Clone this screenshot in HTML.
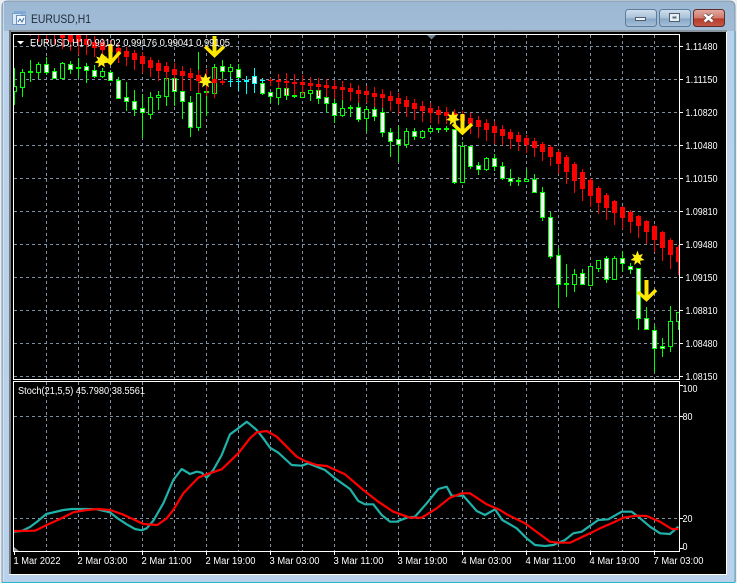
<!DOCTYPE html>
<html><head><meta charset="utf-8"><title>EURUSD,H1</title>
<style>
html,body{margin:0;padding:0;background:#e8eef2;width:737px;height:583px;overflow:hidden}
svg{display:block}
text{font-family:"Liberation Sans",sans-serif;fill:#fff;font-size:10px}
.c{shape-rendering:crispEdges}
.g{stroke:#7f90a2;stroke-width:1;stroke-dasharray:3 3;fill:none}
</style></head><body>
<svg width="737" height="583" viewBox="0 0 737 583" xmlns="http://www.w3.org/2000/svg">
<defs>
<linearGradient id="tb" x1="0" y1="0" x2="0" y2="1"><stop offset="0" stop-color="#9db8d3"/><stop offset=".06" stop-color="#a3bdd7"/><stop offset="1" stop-color="#bcd3ea"/></linearGradient>
<linearGradient id="bt" x1="0" y1="0" x2="0" y2="1"><stop offset="0" stop-color="#d0dfec"/><stop offset=".5" stop-color="#a9c1d9"/><stop offset=".55" stop-color="#88a8c6"/><stop offset="1" stop-color="#a6c0da"/></linearGradient>
<linearGradient id="cl" x1="0" y1="0" x2="0" y2="1"><stop offset="0" stop-color="#e3aca2"/><stop offset=".5" stop-color="#cf7a6c"/><stop offset=".55" stop-color="#b83c28"/><stop offset="1" stop-color="#c25a48"/></linearGradient>
<clipPath id="mc"><rect x="14" y="35" width="665" height="344"/></clipPath>
<clipPath id="sc"><rect x="14" y="382" width="665" height="169"/></clipPath>
<polygon id="st" points="0,-8 1.6,-3.4 5.5,-4.5 3.4,-1 7,1.5 2.6,2.4 3.4,6.5 0,3.8 -3.4,6.5 -2.6,2.4 -7,1.5 -3.4,-1 -5.5,-4.5 -1.6,-3.4" fill="#ffee10"/>
</defs>
<!-- window chrome -->
<path d="M2 582V7Q2 1 8 1H729Q735 1 735 7V582Z" fill="url(#tb)" stroke="#7f98ab" stroke-width="1"/>
<rect x="3" y="31" width="731" height="551" fill="#b9d1ea"/>
<rect x="3" y="2" width="1" height="579" fill="#dde8f2" opacity=".7"/>
<path class="c" d="M2 582.500H735" stroke="#2bb7c4" stroke-width="1"/>
<path class="c" d="M735.500 31V582" stroke="#6fb5c5" stroke-width="1"/>
<rect class="c" x="9" y="30" width="718" height="545" fill="#fff"/>
<rect class="c" x="9" y="30" width="718" height="2" fill="#8a949c"/>
<rect class="c" x="9" y="30" width="2" height="544" fill="#70787e"/>
<rect class="c" x="11" y="32" width="715" height="542" fill="#000"/>

<!-- title -->
<g class="c">
<rect x="14" y="11" width="12" height="3" fill="#7fa9d6"/>
<rect x="12.500" y="13.500" width="9" height="11" fill="#dbe9f7" stroke="#7c9fc8"/>
<rect x="16.500" y="15.500" width="9" height="9" fill="#f2f7fc" stroke="#6d8fbb"/>
</g>
<path d="M18 22l2-3 2 3 2-4" stroke="#3a6da8" fill="none" stroke-width="1"/>
<text x="31" y="23" textLength="60" lengthAdjust="spacingAndGlyphs" style="fill:#1d2b38;font-size:12px">EURUSD,H1</text>

<!-- buttons -->
<rect x="625.500" y="9.500" width="31" height="17" rx="3" fill="url(#bt)" stroke="#5f7d9b"/>
<rect x="635.500" y="17.500" width="10" height="3" fill="#eef2f5" stroke="#4d6070" stroke-width="1" class="c"/>
<rect x="659.500" y="9.500" width="31" height="17" rx="3" fill="url(#bt)" stroke="#5f7d9b"/>
<rect x="669.500" y="13.500" width="10" height="8" fill="#e8eef3" stroke="#4d6070" class="c"/>
<rect x="672.500" y="16.500" width="4" height="2" fill="#55697c" class="c"/>
<rect x="693.500" y="9.500" width="31" height="17" rx="3" fill="url(#cl)" stroke="#5e2b2e"/>
<path d="M704.500 14.500l8 7M712.500 14.500l-8 7" stroke="#5e3a3a" stroke-width="4" fill="none"/>
<path d="M704.500 14.500l8 7M712.500 14.500l-8 7" stroke="#fff" stroke-width="2.600" fill="none"/>

<!-- frames -->
<g class="c" stroke="#fff" stroke-width="1" fill="none">
<path d="M13.500 34.500H679.500V379.500H13.500Z"/>
<path d="M13.500 381.500H679.500V551.500H13.500Z"/>
</g>

<!-- grid -->
<g class="c">
<path class="g" d="M14 46.500H679M14 79.500H679M14 112.500H679M14 145.500H679M14 178.500H679M14 211.500H679M14 244.500H679M14 277.500H679M14 310.500H679M14 343.500H679M14 376.500H679M14 416.500H679M14 518.500H679"/>
<path class="g" d="M46.500 35V379M78.500 35V379M110.500 35V379M142.500 35V379M174.500 35V379M206.500 35V379M238.500 35V379M270.500 35V379M302.500 35V379M334.500 35V379M366.500 35V379M398.500 35V379M430.500 35V379M462.500 35V379M494.500 35V379M526.500 35V379M558.500 35V379M590.500 35V379M622.500 35V379M654.500 35V379"/>
<path class="g" d="M46.500 382V551M78.500 382V551M110.500 382V551M142.500 382V551M174.500 382V551M206.500 382V551M238.500 382V551M270.500 382V551M302.500 382V551M334.500 382V551M366.500 382V551M398.500 382V551M430.500 382V551M462.500 382V551M494.500 382V551M526.500 382V551M558.500 382V551M590.500 382V551M622.500 382V551M654.500 382V551"/>
</g>

<!-- candles -->
<g class="c" clip-path="url(#mc)">
<path fill="none" stroke="#0f0" stroke-width="1" d="M14.500 68V105M22.500 69V97M30.500 60V82M38.500 62V79M46.500 57V75M54.500 68V78M62.500 62V78M70.500 61V74M78.500 58V78M86.500 63V83M94.500 65V78M102.500 68V78M110.500 70V81M118.500 77V99M126.500 82V111M134.500 90V116M142.500 94V138M150.500 92V119M158.500 91V110M166.500 77V106M174.500 77V106M182.500 86V119M190.500 96V137M198.500 52V131M206.500 70V116M214.500 64V93M222.500 60V80M230.500 64V78M238.500 64V78M262.500 83V95M270.500 92V103M278.500 85V105M286.500 85V100M294.500 94V98M302.500 90V97M310.500 87V101M318.500 88V104M326.500 95V113M334.500 99V123M342.500 99V117M350.500 105V117M358.500 103V122M366.500 106V132M374.500 106V121M382.500 108V137M390.500 128V157M398.500 126V162M406.500 128V148M414.500 128V140M422.500 130V139M430.500 127V133M438.500 129V133M446.500 126V132M454.500 129V184M462.500 142V183M470.500 146V169M478.500 162V175M486.500 157V171M494.500 154V171M502.500 162V180M510.500 169V186M518.500 177V186M526.500 169V181M534.500 174V193M542.500 187V221M550.500 212V259M558.500 248V308M566.500 264V297M574.500 269V292M582.500 269V285M590.500 266V285M598.500 260V272M606.500 256V283M614.500 256V279M622.500 251V272M630.500 263V274M638.500 268V330M646.500 307V330M654.500 325V372M662.500 338V357M670.500 306V352M678.500 312V330"/>
<path fill="none" stroke="#0f0" stroke-width="2" d="M28 72h5M76 68h5M204 92h5M292 96h5M348 108h5M436 129h5M444 129h5M516 181h5M564 284h5"/>
<path fill="#000" stroke="#0f0" stroke-width="1" d="M12.500 86.500h4v5h-4zM20.500 72.500h4v15h-4zM36.500 64.500h4v8h-4zM60.500 63.500h4v15h-4zM100.500 71.500h4v5h-4zM148.500 97.500h4v17h-4zM156.500 95.500h4v2h-4zM164.500 78.500h4v18h-4zM196.500 93.500h4v34h-4zM212.500 67.500h4v26h-4zM228.500 67.500h4v4h-4zM276.500 88.500h4v9h-4zM300.500 92.500h4v5h-4zM308.500 90.500h4v3h-4zM340.500 108.500h4v7h-4zM364.500 109.500h4v9h-4zM404.500 131.500h4v13h-4zM420.500 131.500h4v6h-4zM428.500 128.500h4v3h-4zM460.500 146.500h4v36h-4zM484.500 158.500h4v11h-4zM524.500 179.500h4v2h-4zM572.500 274.500h4v10h-4zM588.500 266.500h4v19h-4zM596.500 260.500h4v8h-4zM612.500 258.500h4v21h-4zM668.500 321.500h4v25h-4zM676.500 312.500h4v9h-4z"/>
<path fill="#fff" stroke="#0f0" stroke-width="1" d="M44.500 64.500h4v8h-4zM52.500 71.500h4v7h-4zM68.500 64.500h4v5h-4zM84.500 66.500h4v4h-4zM92.500 70.500h4v6h-4zM108.500 72.500h4v8h-4zM116.500 80.500h4v18h-4zM124.500 97.500h4v4h-4zM132.500 101.500h4v8h-4zM140.500 108.500h4v4h-4zM172.500 78.500h4v13h-4zM180.500 91.500h4v10h-4zM188.500 102.500h4v25h-4zM220.500 66.500h4v5h-4zM236.500 69.500h4v8h-4zM260.500 83.500h4v10h-4zM268.500 92.500h4v4h-4zM284.500 88.500h4v7h-4zM316.500 90.500h4v8h-4zM324.500 97.500h4v6h-4zM332.500 103.500h4v12h-4zM356.500 107.500h4v12h-4zM372.500 109.500h4v7h-4zM380.500 112.500h4v20h-4zM388.500 132.500h4v9h-4zM396.500 139.500h4v5h-4zM412.500 131.500h4v5h-4zM452.500 129.500h4v53h-4zM468.500 146.500h4v20h-4zM476.500 165.500h4v4h-4zM492.500 158.500h4v8h-4zM500.500 166.500h4v12h-4zM508.500 178.500h4v3h-4zM532.500 179.500h4v13h-4zM540.500 192.500h4v25h-4zM548.500 217.500h4v39h-4zM556.500 255.500h4v29h-4zM580.500 273.500h4v11h-4zM604.500 258.500h4v21h-4zM620.500 258.500h4v5h-4zM628.500 266.500h4v3h-4zM636.500 268.500h4v50h-4zM644.500 318.500h4v11h-4zM652.500 330.500h4v18h-4zM660.500 346.500h4v2h-4z"/>
<!-- cyan -->
<path fill="none" stroke="#0ff" stroke-width="1" d="M230.500 77V87M238.500 78V91M246.500 76V94M254.500 68V93M262.500 78V83"/>
<path fill="none" stroke="#0ff" stroke-width="1" d="M228 81.500h5M236 81.500h5M260 80.500h5"/>
<path fill="none" stroke="#0ff" stroke-width="2" d="M244 81h5"/>
<path fill="#fff" stroke="#0ff" stroke-width="1" d="M252.500 76.500h4v7h-4z"/>
<!-- red -->
<path fill="none" stroke="#f00" stroke-width="1" d="M30.500 35V36M38.500 35V42M46.500 35V43M54.500 35V44M62.500 35V49M70.500 35V51M78.500 35V55M86.500 35V55M94.500 36V57M102.500 38V58M110.500 40V60M118.500 44V63M126.500 47V66M134.500 50V70M142.500 52V73M150.500 57V77M158.500 60V81M166.500 62V81M174.500 63V90M182.500 66V91M190.500 68V91M198.500 70V93M206.500 69V96M214.500 68V98M222.500 79V85M270.500 78V86M278.500 74V88M286.500 73V95M294.500 74V95M302.500 75V95M310.500 77V90M318.500 78V96M326.500 79V97M334.500 80V99M342.500 81V100M350.500 83V101M358.500 85V103M366.500 86V103M374.500 87V107M382.500 89V108M390.500 91V111M398.500 93V114M406.500 96V117M414.500 99V120M422.500 101V122M430.500 103V123M438.500 106V124M446.500 107V124M454.500 109V127M462.500 111V130M470.500 113V134M478.500 116V138M486.500 119V141M494.500 121V144M502.500 125V145M510.500 129V149M518.500 132V151M526.500 135V153M534.500 138V157M542.500 142V161M550.500 145V166M558.500 150V174M566.500 155V184M574.500 162V193M582.500 169V201M590.500 178V207M598.500 186V214M606.500 193V220M614.500 200V225M622.500 206V229M630.500 210V233M638.500 215V238M646.500 220V244M654.500 225V252M662.500 231V261M670.500 238V269M678.500 245V275M268 80.500h5"/>
<path fill="#f00" d="M60 35h5v3h-5zM68 35h5v7h-5zM76 35h5v7h-5zM84 39h5v6h-5zM92 42h5v6h-5zM100 43h5v7h-5zM108 45h5v7h-5zM116 48h5v6h-5zM124 51h5v6h-5zM132 53h5v7h-5zM140 56h5v8h-5zM148 60h5v8h-5zM156 63h5v8h-5zM164 66h5v6h-5zM172 69h5v6h-5zM180 71h5v5h-5zM188 73h5v5h-5zM196 75h5v6h-5zM204 78h5v5h-5zM212 79h5v4h-5zM220 81h5v2h-5zM276 80h5v2h-5zM284 81h5v2h-5zM292 82h5v2h-5zM300 82h5v3h-5zM308 83h5v3h-5zM316 84h5v3h-5zM324 85h5v3h-5zM332 86h5v3h-5zM340 87h5v3h-5zM348 88h5v4h-5zM356 90h5v4h-5zM364 91h5v4h-5zM372 93h5v4h-5zM380 94h5v4h-5zM388 96h5v5h-5zM396 98h5v6h-5zM404 100h5v7h-5zM412 103h5v6h-5zM420 106h5v5h-5zM428 108h5v5h-5zM436 110h5v5h-5zM444 112h5v4h-5zM452 113h5v5h-5zM460 115h5v6h-5zM468 118h5v6h-5zM476 120h5v7h-5zM484 123h5v7h-5zM492 126h5v7h-5zM500 129h5v7h-5zM508 132h5v7h-5zM516 135h5v7h-5zM524 138h5v7h-5zM532 141h5v7h-5zM540 144h5v8h-5zM548 147h5v10h-5zM556 152h5v12h-5zM564 157h5v15h-5zM572 164h5v17h-5zM580 172h5v17h-5zM588 180h5v16h-5zM596 188h5v15h-5zM604 195h5v13h-5zM612 201h5v12h-5zM620 207h5v11h-5zM628 212h5v10h-5zM636 216h5v10h-5zM644 221h5v11h-5zM652 226h5v14h-5zM660 232h5v16h-5zM668 240h5v15h-5zM676 247h5v15h-5z"/>
</g>

<!-- stars and arrows -->
<g clip-path="url(#mc)">
<use href="#st" x="101.500" y="61"/>
<use href="#st" x="205.500" y="81"/>
<use href="#st" x="453" y="118.500"/>
<use href="#st" x="637.500" y="258.500"/>
<g fill="none" stroke="#ffe600" stroke-linejoin="miter" stroke-linecap="butt">
<path stroke-width="4" d="M110.500 44V62M214.500 36V55M462.500 114V132M646.500 280V298"/>
<path stroke-width="3.500" d="M101 55L110.500 63L120 52M205 46.500L214.500 55.500L224 46.500M453 124L462.500 133L472 124M638 292L646.500 299.500L656 290"/>
</g>
</g>

<!-- markers -->
<path d="M427 35h9l-4.500 4.500z" fill="#6f8090"/>
<path d="M14 547l5 4h-5z" fill="#8b98a4"/>
<path d="M17 41h7l-3.500 3.500z" fill="#fff"/>
<text x="30" y="46" textLength="200" lengthAdjust="spacingAndGlyphs">EURUSD,H1 0.99102 0.99176 0.99041 0.99105</text>
<text x="18" y="394" textLength="127" lengthAdjust="spacingAndGlyphs">Stoch(21,5,5) 45.7980 38.5561</text>

<!-- stochastic -->
<g clip-path="url(#sc)" fill="none" stroke-width="2.200" stroke-linejoin="round">
<polyline stroke="#20b2aa" points="14,531.700 21.700,531 30,527 38.300,520.700 46.300,514 55,512 63.300,510 71.700,509 86.700,509 96.700,509.300 110,512.300 116.700,517.700 126.700,524.300 135,529 141.700,530.300 146.700,528.300 153.300,520.700 163.300,503.300 173.300,480 181.700,469 190,474 196.700,471.700 201.700,472.700 206.700,477.700 213.300,470 221.700,455 230,434.300 238.300,428.300 246.700,421.700 250,424.300 256.700,430 263.300,438.300 270,447.700 278.300,452.700 291.700,465 301.700,465.700 308.300,463.300 316.700,466.700 325,470 335,478.300 350,489 358.300,501 365,504.300 373.300,504.300 381.700,515 390,521.700 396.700,521.700 406.700,517.700 415,516.700 426.700,503.300 438.300,489 446.700,486.700 451.700,495.700 463.300,495.700 476.700,511 485,515 495,509.300 502.300,520 516.700,528.300 526.700,538.300 535,545 545,546 553.300,545 565,540 573.300,533.300 581.700,531.700 598.300,520 608.300,519.300 621.700,511.700 631.700,511.700 638.300,516.700 650,526.700 660,533.300 670,534 678.300,526.700"/>
<polyline stroke="#f00" points="14,531 35,530.700 46.700,525 60,519 73.300,512.300 86.700,510 98.300,509 110,510 121.700,514 133.300,519.300 143.300,524 157.300,525 166.700,518.300 173.300,510 183.300,493.300 198.300,477.700 206.700,474.300 221.700,469.300 238.300,453.300 250,438.300 256.700,432.300 266.700,431 276.700,436.700 286.700,446.700 296.700,456.700 305,461 316.700,465 326.700,466 345,474.300 363.300,490 378.300,501.700 393.300,511.700 410,517.700 421.700,517.700 436.700,508.300 450,497.700 461.700,493.300 470,493.300 486.700,504.300 500,510 506.700,514.300 525,523.300 550,541.700 558.300,542.700 570,542.700 590,533.300 600,528.300 611.700,523.300 623.300,517.700 636.700,515.700 646.700,516 660,521.700 671.700,529 678.300,529"/>
</g>

<!-- axis ticks -->
<path class="c" stroke="#fff" stroke-width="1" fill="none" d="M680 46.500h3M680 79.500h3M680 112.500h3M680 145.500h3M680 178.500h3M680 211.500h3M680 244.500h3M680 277.500h3M680 310.500h3M680 343.500h3M680 376.500h3M680 385.500h3M680 416.500h3M680 518.500h3M680 548.500h3M14.500 552v3M78.500 552v3M142.500 552v3M206.500 552v3M270.500 552v3M334.500 552v3M398.500 552v3M462.500 552v3M526.500 552v3M590.500 552v3M654.500 552v3"/>

<!-- price labels -->
<g>
<text x="685.500" y="50" textLength="32" lengthAdjust="spacingAndGlyphs">1.11480</text>
<text x="685.500" y="83" textLength="32" lengthAdjust="spacingAndGlyphs">1.11150</text>
<text x="685.500" y="116" textLength="32" lengthAdjust="spacingAndGlyphs">1.10820</text>
<text x="685.500" y="149" textLength="32" lengthAdjust="spacingAndGlyphs">1.10480</text>
<text x="685.500" y="182" textLength="32" lengthAdjust="spacingAndGlyphs">1.10150</text>
<text x="685.500" y="215" textLength="32" lengthAdjust="spacingAndGlyphs">1.09810</text>
<text x="685.500" y="248" textLength="32" lengthAdjust="spacingAndGlyphs">1.09480</text>
<text x="685.500" y="281" textLength="32" lengthAdjust="spacingAndGlyphs">1.09150</text>
<text x="685.500" y="314" textLength="32" lengthAdjust="spacingAndGlyphs">1.08810</text>
<text x="685.500" y="347" textLength="32" lengthAdjust="spacingAndGlyphs">1.08480</text>
<text x="685.500" y="380" textLength="32" lengthAdjust="spacingAndGlyphs">1.08150</text>
<text x="682.500" y="392" textLength="15" lengthAdjust="spacingAndGlyphs">100</text>
<text x="682.500" y="420" textLength="10" lengthAdjust="spacingAndGlyphs">80</text>
<text x="682.500" y="522" textLength="10" lengthAdjust="spacingAndGlyphs">20</text>
<text x="682.500" y="550" textLength="5" lengthAdjust="spacingAndGlyphs">0</text>
</g>
<!-- time labels -->
<g>
<text x="13.500" y="564" textLength="47" lengthAdjust="spacingAndGlyphs">1 Mar 2022</text>
<text x="77.500" y="564" textLength="50" lengthAdjust="spacingAndGlyphs">2 Mar 03:00</text>
<text x="141.500" y="564" textLength="50" lengthAdjust="spacingAndGlyphs">2 Mar 11:00</text>
<text x="205.500" y="564" textLength="50" lengthAdjust="spacingAndGlyphs">2 Mar 19:00</text>
<text x="269.500" y="564" textLength="50" lengthAdjust="spacingAndGlyphs">3 Mar 03:00</text>
<text x="333.500" y="564" textLength="50" lengthAdjust="spacingAndGlyphs">3 Mar 11:00</text>
<text x="397.500" y="564" textLength="50" lengthAdjust="spacingAndGlyphs">3 Mar 19:00</text>
<text x="461.500" y="564" textLength="50" lengthAdjust="spacingAndGlyphs">4 Mar 03:00</text>
<text x="525.500" y="564" textLength="50" lengthAdjust="spacingAndGlyphs">4 Mar 11:00</text>
<text x="589.500" y="564" textLength="50" lengthAdjust="spacingAndGlyphs">4 Mar 19:00</text>
<text x="653.500" y="564" textLength="50" lengthAdjust="spacingAndGlyphs">7 Mar 03:00</text>
</g>
</svg>
</body></html>
